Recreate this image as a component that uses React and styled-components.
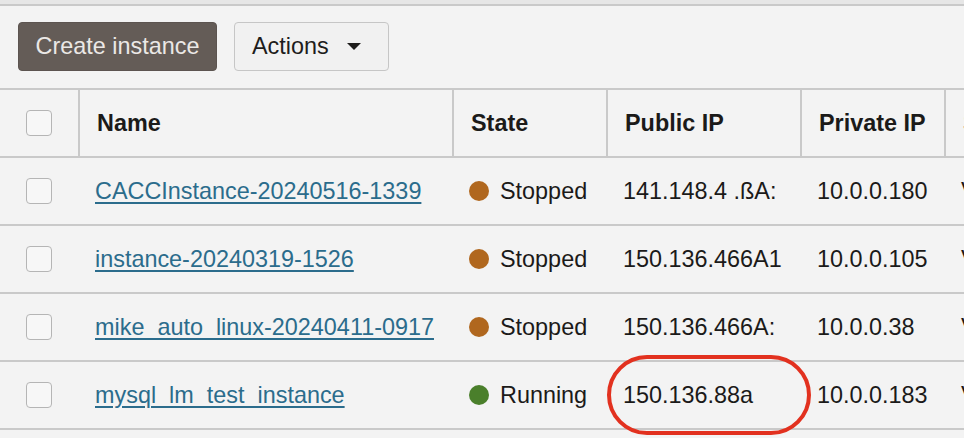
import styled, { createGlobalStyle } from "styled-components";

const GlobalStyle = createGlobalStyle`
  html, body {
    margin: 0;
    padding: 0;
    background: #f3f3f3;
    font-family: "Liberation Sans", Arial, sans-serif;
    color: #1b1a19;
  }
`;

const Page = styled.div`
  width: 964px;
  height: 438px;
  overflow: hidden;
  background: #f3f3f3;
  border-top: 4px solid #e6e6e6;
  box-sizing: border-box;
`;

const TopRule = styled.div`
  height: 2px;
  background: #c9c9c9;
`;

const Toolbar = styled.div`
  display: flex;
  gap: 17px;
  padding: 16px 0 17px 18px;
`;

const Button = styled.button`
  height: 49px;
  padding: 0 ${(props) => (props.primary ? 0 : 17)}px;
  border-radius: 4px;
  font-family: "Liberation Sans", Arial, sans-serif;
  font-size: 23.4px;
  white-space: nowrap;
  display: flex;
  align-items: center;
  gap: 14px;
  cursor: pointer;
  background: ${(props) => (props.primary ? "#645c57" : "#f1f1f1")};
  color: ${(props) => (props.primary ? "#ebe8e6" : "#1e1d1c")};
  border: ${(props) => (props.primary ? "1px solid #5c5450" : "1.5px solid #c6c6c6")};
  width: ${(props) => props.w}px;
  justify-content: ${(props) => (props.primary ? "center" : "flex-start")};
`;

const Caret = styled.span`
  width: 0;
  height: 0;
  border-left: 7px solid transparent;
  border-right: 7px solid transparent;
  border-top: 7px solid #1e1d1c;
  margin-left: 4px;
`;

const Table = styled.div`
  width: 1070px;
`;

const Row = styled.div`
  display: grid;
  grid-template-columns: 78px 374px 154px 194px 144px 128px;
  height: ${(props) => (props.head ? 70 : 68)}px;
  box-sizing: border-box;
  border-top: ${(props) => (props.head ? "2px solid #c9c9c9" : "none")};
  border-bottom: 2px solid #c9c9c9;
`;

const Cell = styled.div`
  position: relative;
  display: flex;
  align-items: center;
  gap: 11px;
  padding-left: ${(props) => (props.check ? 0 : 17)}px;
  justify-content: ${(props) => (props.check ? "center" : "flex-start")};
  border-left: ${(props) => (props.sep ? "2px solid #c9c9c9" : "none")};
  font-size: 23.4px;
  font-weight: ${(props) => (props.head ? 700 : 400)};
  white-space: nowrap;
`;

const Checkbox = styled.span`
  width: 24px;
  height: 24px;
  border: 1.5px solid #b5b5b5;
  border-radius: 4px;
  background: #f7f7f7;
`;

const NameLink = styled.a`
  color: #2b6c8c;
  text-decoration: underline;
  text-underline-offset: 3px;
  text-decoration-thickness: 1.5px;
`;

const Dot = styled.span`
  width: 20px;
  height: 20px;
  border-radius: 50%;
  background: ${(props) => props.color};
  flex-shrink: 0;
`;

const Circle = styled.span`
  position: absolute;
  left: 1px;
  top: -7px;
  width: 204px;
  height: 80px;
  box-sizing: border-box;
  border: 4px solid #e2311f;
  border-radius: 40px;
  pointer-events: none;
`;

const rows = [
  { name: "CACCInstance-20240516-1339", state: "Stopped", pub: "141.148.4 .ßA:", priv: "10.0.0.180" },
  { name: "instance-20240319-1526", state: "Stopped", pub: "150.136.466A1", priv: "10.0.0.105" },
  { name: "mike_auto_linux-20240411-0917", state: "Stopped", pub: "150.136.466A:", priv: "10.0.0.38" },
  { name: "mysql_lm_test_instance", state: "Running", pub: "150.136.88a", priv: "10.0.0.183", marked: true },
];

function App() {
  return (
    <Page>
      <GlobalStyle />
      <TopRule />
      <Toolbar>
        <Button primary w={199}>Create instance</Button>
        <Button w={155}>
          Actions <Caret />
        </Button>
      </Toolbar>
      <Table>
        <Row head>
          <Cell check>
            <Checkbox />
          </Cell>
          <Cell head sep>Name</Cell>
          <Cell head sep>State</Cell>
          <Cell head sep>Public IP</Cell>
          <Cell head sep>Private IP</Cell>
          <Cell head sep>Shape</Cell>
        </Row>
        {rows.map((r) => (
          <Row key={r.name}>
            <Cell check>
              <Checkbox />
            </Cell>
            <Cell>
              <NameLink>{r.name}</NameLink>
            </Cell>
            <Cell>
              <Dot color={r.state === "Running" ? "#4a7f2b" : "#b0671e"} />
              {r.state}
            </Cell>
            <Cell>
              {r.pub}
              {r.marked && <Circle />}
            </Cell>
            <Cell>{r.priv}</Cell>
            <Cell>VM.Standard</Cell>
          </Row>
        ))}
      </Table>
    </Page>
  );
}

export default App;
